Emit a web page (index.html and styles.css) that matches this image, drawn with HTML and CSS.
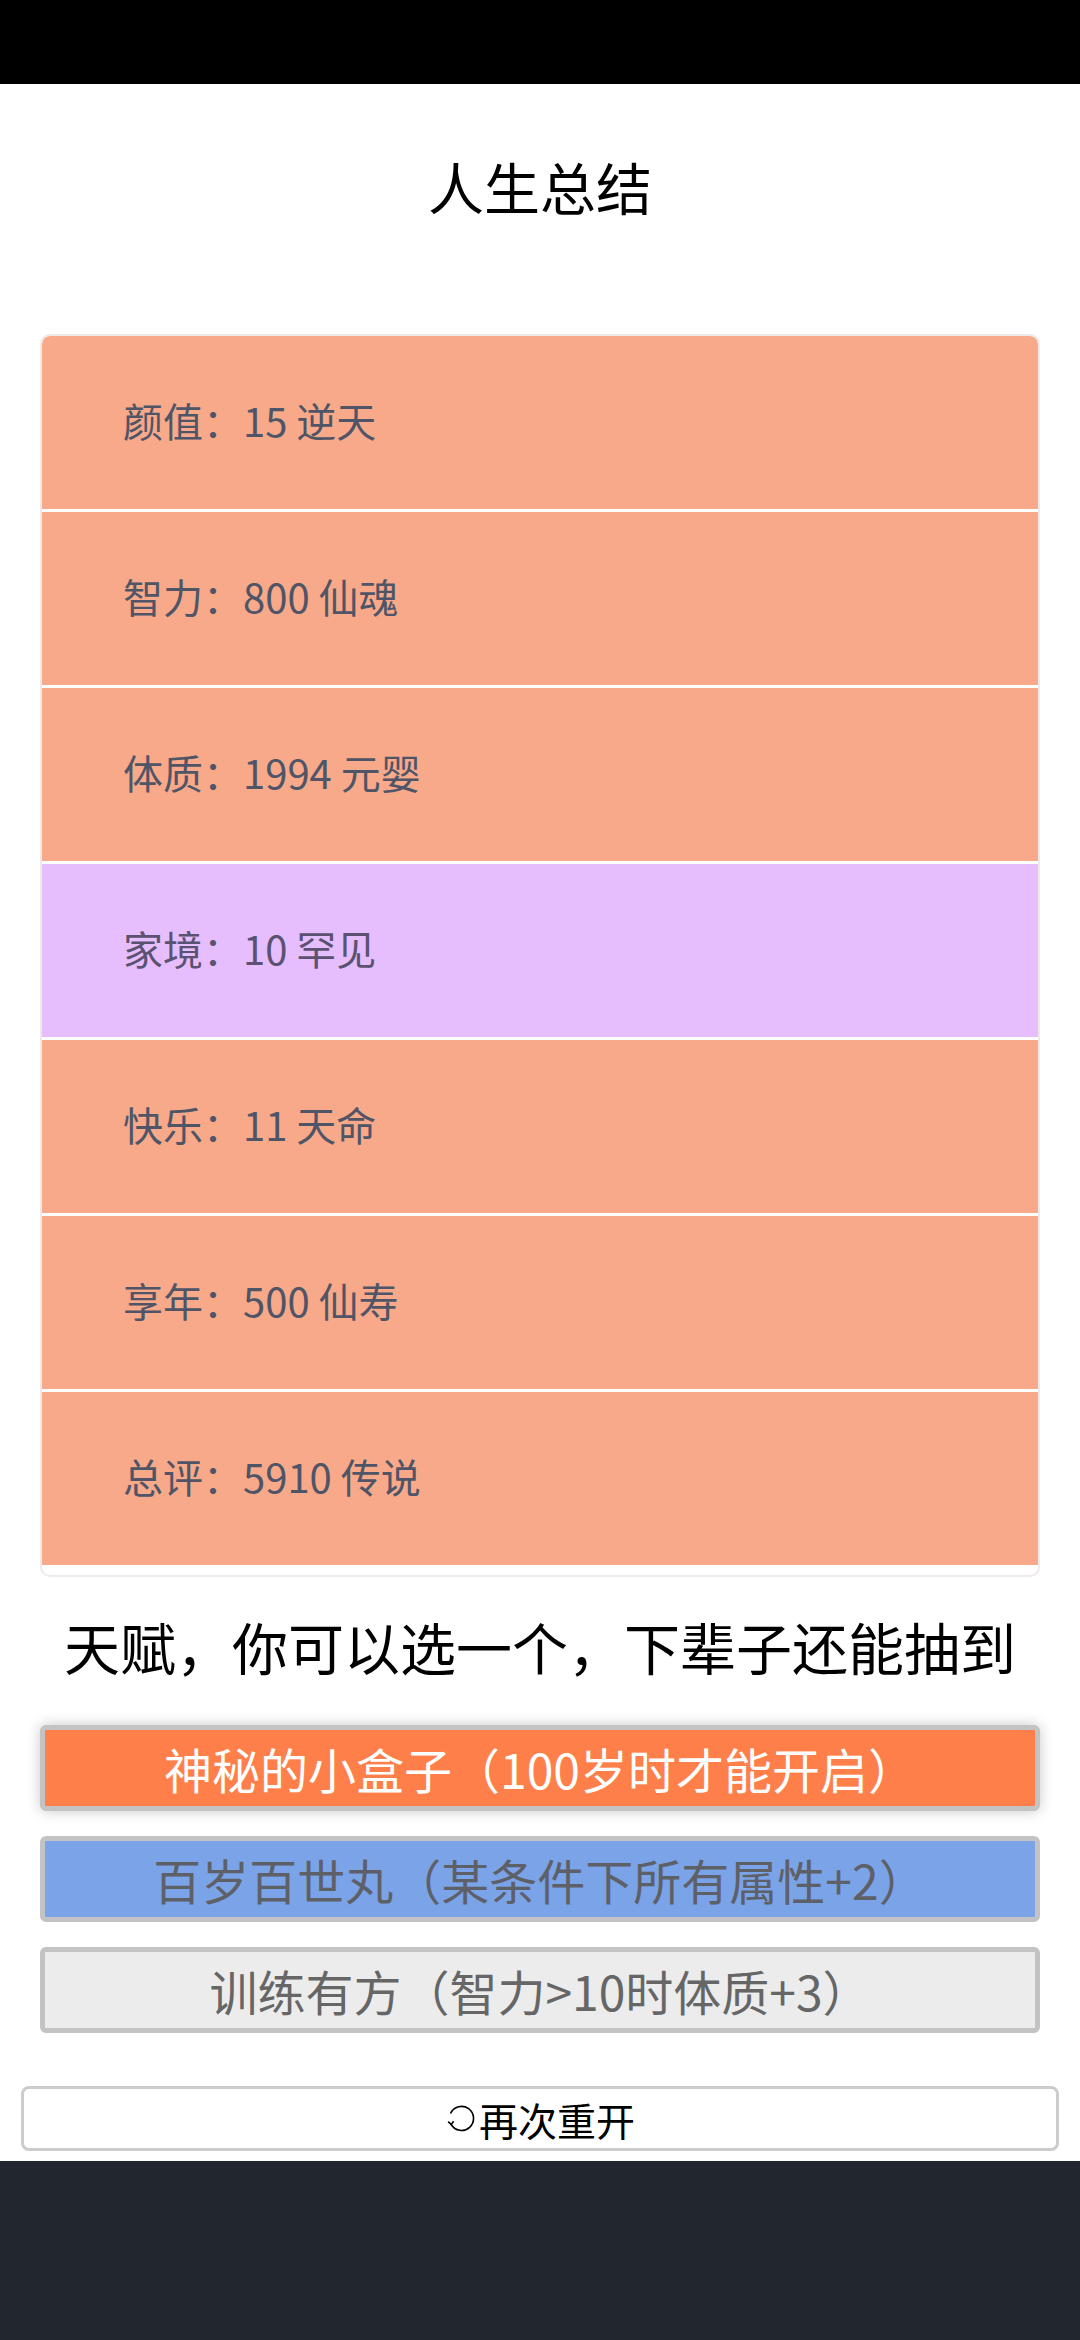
FILE: index.html
```html
<!DOCTYPE html>
<html lang="zh">
<head>
<meta charset="utf-8">
<title>人生总结</title>
<link rel="stylesheet" href="styles.css">
</head>
<body>
<div class="status"></div>
<main class="page">
  <h1 class="title">人生总结</h1>
  <section class="card">
    <div class="row orange">颜值：15 逆天</div>
    <div class="row orange">智力：800 仙魂</div>
    <div class="row orange">体质：1994 元婴</div>
    <div class="row purple">家境：10 罕见</div>
    <div class="row orange">快乐：11 天命</div>
    <div class="row orange">享年：500 仙寿</div>
    <div class="row orange">总评：5910 传说</div>
  </section>
  <h2 class="subtitle">天赋，你可以选一个，下辈子还能抽到</h2>
  <div class="talents">
    <div class="talent t-orange">神秘的小盒子（100岁时才能开启）</div>
    <div class="talent t-blue">百岁百世丸（某条件下所有属性+2）</div>
    <div class="talent t-gray">训练有方（智力&gt;10时体质+3）</div>
  </div>
  <button class="restart"><svg class="icon" viewBox="0 0 32 32" width="32" height="32"><path d="M6.2 21.5 A12 12 0 1 0 5.6 10.5" fill="none" stroke="#000" stroke-width="1.6"/><path d="M3.2 18.6 L6.2 21.6 L8.6 18.2" fill="none" stroke="#000" stroke-width="1.6"/></svg>再次重开</button>
</main>
</body>
</html>
```
FILE: styles.css
```css
html, body {
  margin: 0;
  padding: 0;
}
body {
  background: #22272f;
  font-family: "Noto Sans CJK SC", "Noto Sans", sans-serif;
  width: 1080px;
  height: 2340px;
}
.status {
  height: 84px;
  background: #000;
}
.page {
  background: #fff;
  padding: 62px 0 10px;
  display: flex;
  flex-direction: column;
}
.title {
  margin: 0;
  font-size: 56px;
  font-weight: 400;
  line-height: 80px;
  text-align: center;
  color: #000;
}
.card {
  margin: 108px 40px 0;
  border: 2px solid #efe9e7;
  border-radius: 10px;
  overflow: hidden;
  padding-bottom: 10px;
  display: flex;
  flex-direction: column;
  gap: 3px;
  background: #fff;
}
.row {
  height: 173px;
  box-sizing: border-box;
  padding: 0 0 6px 81px;
  display: flex;
  align-items: center;
  font-size: 40px;
  color: #4f5566;
}
.row.orange {
  background: #f7a98a;
}
.row.purple {
  background: #e6befe;
  color: #5a5270;
}
.card .row:first-child {
  border-radius: 8px 8px 0 0;
}
.subtitle {
  margin: 29px 0 0;
  font-size: 56px;
  font-weight: 400;
  line-height: 80px;
  text-align: center;
  color: #000;
}
.talents {
  margin: 39px 40px 0;
  display: flex;
  flex-direction: column;
  gap: 25px;
}
.talent {
  height: 76px;
  border: 5px solid #c3c3c3;
  border-radius: 6px;
  display: flex;
  align-items: center;
  justify-content: center;
  font-size: 48px;
  color: #666;
}
.t-orange {
  background: #ff7f4b;
  color: #fff;
  box-shadow: 0 0 14px rgba(0, 0, 0, 0.22);
}
.t-blue {
  background: #7ba3e8;
  color: #5e6068;
}
.t-gray {
  background: #ececec;
  color: #666;
}
.restart {
  margin: 53px 21px 0;
  height: 65px;
  border: 3px solid #cccccc;
  border-radius: 8px;
  background: #fff;
  display: flex;
  align-items: center;
  justify-content: center;
  font-family: "Noto Sans CJK SC", sans-serif;
  font-size: 39px;
  color: #000;
  padding: 0;
}
.icon {
  margin-right: 2px;
}
```
